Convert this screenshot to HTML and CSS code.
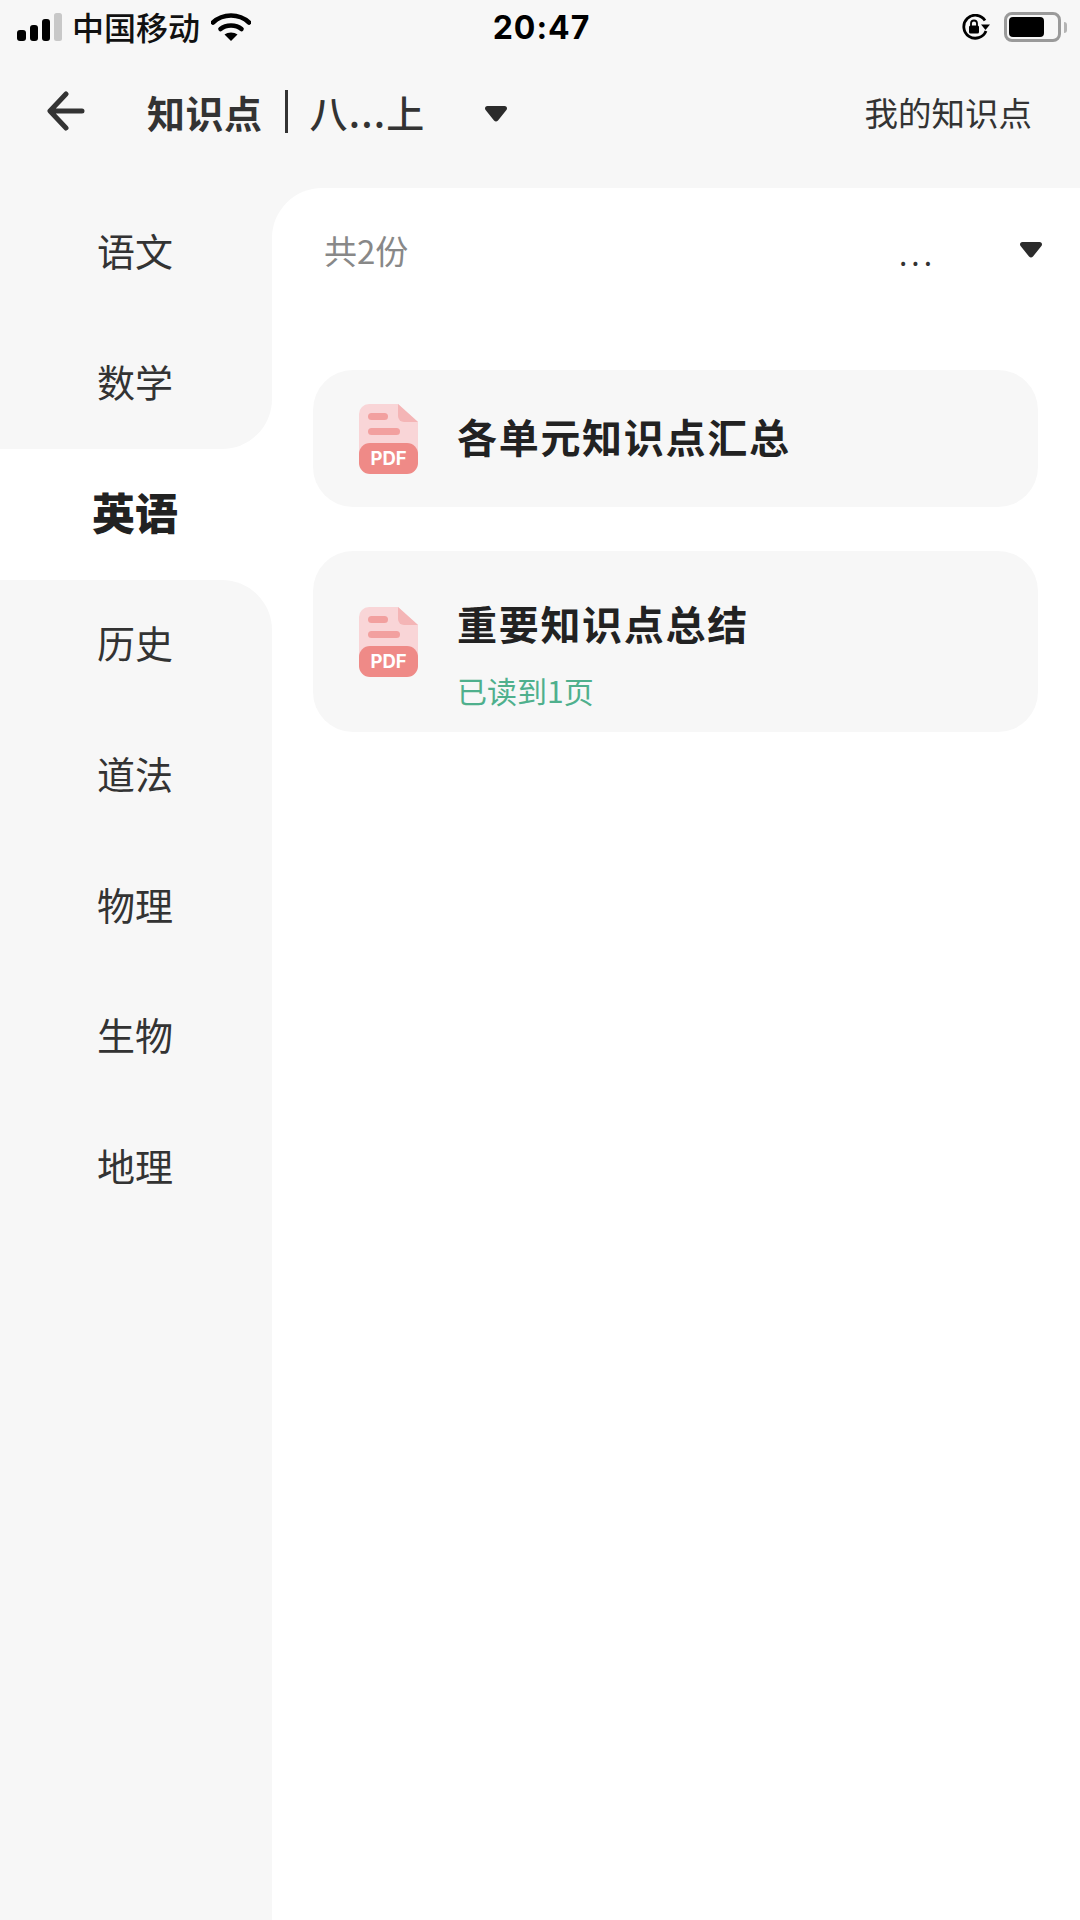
FILE: index.html
```html
<!DOCTYPE html>
<html lang="zh-CN">
<head>
<meta charset="utf-8">
<title>知识点</title>
<link rel="stylesheet" href="styles.css">
</head>
<body>
<div class="app">
  <header class="statusbar">
    <div class="status-left">
      <svg class="ic-signal" width="45" height="28" viewBox="0 0 45 28"><rect x="0" y="17" width="9" height="11" rx="3" fill="#000"/><rect x="13" y="12" width="8" height="16" rx="3" fill="#000"/><rect x="25" y="6" width="8" height="22" rx="3" fill="#000"/><rect x="37" y="0" width="8" height="28" rx="2.5" fill="#c8c8c8"/></svg>
      <span class="carrier">中国移动</span>
      <svg class="ic-wifi" width="40" height="29" viewBox="0 0 40 29"><path d="M2 10.5C12 1.2 28 1.2 38 10.5" fill="none" stroke="#000" stroke-width="4.6" stroke-linecap="round"/><path d="M9.5 17C15 12.3 25 12.3 30.5 17" fill="none" stroke="#000" stroke-width="4.6" stroke-linecap="round"/><path d="M13.5 22.6C17 19.9 23 19.9 26.5 22.6L20 29Z" fill="#000"/></svg>
    </div>
    <div class="time">20:47</div>
    <div class="status-right">
      <svg class="ic-rotate" width="29" height="27" viewBox="0 0 29 27"><path d="M24 6.5A11.5 11.5 0 1 0 25 17" fill="none" stroke="#000" stroke-width="2.8"/><path d="M20 10.5H29L24.5 16Z" fill="#000"/><rect x="8" y="11.5" width="10" height="8" rx="1.5" fill="#000"/><path d="M10 12V9.5a3 3 0 0 1 6 0V12" fill="none" stroke="#000" stroke-width="1.8"/></svg>
      <div class="battery"><div class="battery-fill"></div></div>
      <div class="battery-nub"></div>
    </div>
  </header>

  <nav class="navbar">
    <svg class="ic-back" width="38" height="40" viewBox="0 0 38 40"><path d="M35 20H4M19 3L3 20L19 37" fill="none" stroke="#333" stroke-width="5" stroke-linecap="round" stroke-linejoin="round"/></svg>
    <div class="nav-title">
      <span class="nav-name">知识点</span>
      <i class="nav-sep"></i>
      <span class="nav-grade">八...上</span>
    </div>
    <svg class="caret nav-caret" width="24" height="18" viewBox="0 0 24 18"><path d="M1 3.5Q1 1 3.5 1H20.5Q23 1 23 3.5Q23 4.5 22 5.5L14 15.5Q12 17.5 10 15.5L2 5.5Q1 4.5 1 3.5Z" fill="#2b2b2b"/></svg>
    <a class="nav-link">我的知识点</a>
  </nav>

  <main class="main">
    <aside class="sidebar">
      <div class="subject">语文</div>
      <div class="subject before-active">数学</div>
      <div class="subject active">英语</div>
      <div class="subject after-active">历史</div>
      <div class="subject">道法</div>
      <div class="subject">物理</div>
      <div class="subject">生物</div>
      <div class="subject">地理</div>
      <div class="sidebar-fill"></div>
    </aside>

    <section class="panel">
      <div class="panel-head">
        <span class="count">共2份</span>
        <span class="filter">...</span>
        <svg class="caret" width="24" height="18" viewBox="0 0 24 18"><path d="M1 3.5Q1 1 3.5 1H20.5Q23 1 23 3.5Q23 4.5 22 5.5L14 15.5Q12 17.5 10 15.5L2 5.5Q1 4.5 1 3.5Z" fill="#2b2b2b"/></svg>
      </div>

      <div class="card-list">
        <article class="card">
          <svg class="ic-pdf" width="59" height="70" viewBox="0 0 59 70"><path d="M10 0H39L59 18V60H0V10A10 10 0 0 1 10 0Z" fill="#f9d5d7"/><path d="M39 0L59 18H45A6 6 0 0 1 39 12Z" fill="#f4b5b6"/><rect x="9" y="9" width="20" height="7" rx="3.5" fill="#f2a09f"/><rect x="9" y="24" width="32" height="7" rx="3.5" fill="#f2a09f"/><rect x="0" y="39" width="59" height="31" rx="11" fill="#ef8a87"/><text class="pdf-label" x="29.5" y="61">PDF</text></svg>
          <div class="card-text">
            <h3 class="card-title">各单元知识点汇总</h3>
          </div>
        </article>
        <article class="card">
          <svg class="ic-pdf" width="59" height="70" viewBox="0 0 59 70"><path d="M10 0H39L59 18V60H0V10A10 10 0 0 1 10 0Z" fill="#f9d5d7"/><path d="M39 0L59 18H45A6 6 0 0 1 39 12Z" fill="#f4b5b6"/><rect x="9" y="9" width="20" height="7" rx="3.5" fill="#f2a09f"/><rect x="9" y="24" width="32" height="7" rx="3.5" fill="#f2a09f"/><rect x="0" y="39" width="59" height="31" rx="11" fill="#ef8a87"/><text class="pdf-label" x="29.5" y="61">PDF</text></svg>
          <div class="card-text with-sub">
            <h3 class="card-title">重要知识点总结</h3>
            <p class="card-sub">已读到1页</p>
          </div>
        </article>
      </div>
    </section>
  </main>
</div>
</body>
</html>
```

FILE: styles.css
```css
* { box-sizing: border-box; }

html, body {
  margin: 0;
  padding: 0;
  width: 1080px;
  height: 1920px;
  overflow: hidden;
  background: #f7f7f7;
  font-family: "Noto Sans CJK SC", "Noto Sans", sans-serif;
  color: #333;
}

.app {
  display: flex;
  flex-direction: column;
  height: 1920px;
}

/* status bar */
.statusbar {
  display: grid;
  grid-template-columns: 1fr auto 1fr;
  align-items: center;
  height: 54px;
  padding: 0 13px 0 17px;
  flex: none;
}

.status-left {
  display: flex;
  align-items: center;
}

.carrier {
  margin: -2px 0 0 10px;
  font-size: 32px;
  line-height: 40px;
  font-weight: 500;
  color: #111;
}

.ic-wifi { margin-left: 11px; margin-top: -1px; }

.time {
  margin-left: -1px;
  font-family: "Inter", "Liberation Sans", sans-serif;
  font-size: 32px;
  font-weight: 700;
  letter-spacing: 1px;
  color: #000;
}

.status-right {
  display: flex;
  align-items: center;
  justify-content: flex-end;
}

.battery {
  margin-left: 14px;
  width: 57px;
  height: 30px;
  padding: 2px;
  border: 3px solid #9a9a9a;
  border-radius: 8px;
}

.battery-fill {
  width: 35px;
  height: 20px;
  background: #000;
  border-radius: 4px;
}

.battery-nub {
  margin-left: 3px;
  width: 3px;
  height: 11px;
  background: #b4b4b4;
  border-radius: 0 3px 3px 0;
}

/* nav bar */
.navbar {
  display: flex;
  align-items: center;
  flex: none;
  height: 134px;
  padding: 0 48px 19px 47px;
}

.ic-back { margin-top: -2px; }

.nav-title {
  display: flex;
  align-items: center;
  margin-left: 62px;
  font-size: 38px;
  line-height: 50px;
  font-weight: 700;
  color: #333;
}

.nav-name { letter-spacing: 0.5px; }

.nav-sep {
  display: block;
  width: 3px;
  height: 43px;
  margin: 0 22px 0 22px;
  background: #333;
}

.nav-grade {
  font-weight: 500;
  letter-spacing: 1.2px;
}

.nav-caret { margin-left: 58px; margin-top: 4px; }

.nav-link {
  margin-left: auto;
  font-size: 33.5px;
  line-height: 44px;
  color: #333;
}

/* body */
.main {
  display: flex;
  flex: 1;
  min-height: 0;
}

.sidebar {
  display: flex;
  flex-direction: column;
  flex: none;
  width: 272px;
  background: #fff;
}

.subject {
  display: flex;
  align-items: center;
  justify-content: center;
  flex: none;
  height: 130.7px;
  padding: 0 2px 7px 0;
  background: #f7f7f7;
  font-size: 38px;
  color: #333;
}

.subject.before-active { border-bottom-right-radius: 50px; }
.subject.after-active { border-top-right-radius: 50px; }

.subject.active {
  background: #fff;
  font-size: 43px;
  font-weight: 900;
  color: #222;
}

.sidebar-fill {
  flex: 1;
  background: #f7f7f7;
}

.panel {
  flex: 1;
  background: #fff;
  border-top-left-radius: 50px;
}

.panel-head {
  display: flex;
  align-items: center;
  height: 128px;
  padding: 0 37px 0 52px;
}

.count {
  margin-top: -5px;
  font-size: 33px;
  line-height: 42px;
  color: #888;
}

.filter {
  margin-left: auto;
  font-size: 30px;
  line-height: 42px;
  letter-spacing: 4px;
  color: #333;
  position: relative;
  top: 1px;
}

.panel-head .caret { margin-left: 83px; margin-top: -4px; }

.card-list {
  display: flex;
  flex-direction: column;
  gap: 44px;
  margin: 54px 42px 0 41px;
}

.card {
  display: flex;
  align-items: center;
  gap: 39px;
  min-height: 137px;
  padding-left: 46px;
  background: #f7f7f7;
  border-radius: 40px;
}

.ic-pdf { flex: none; }

.pdf-label {
  font-family: "Inter", "Liberation Sans", sans-serif;
  font-size: 18.5px;
  font-weight: 700;
  fill: #fff;
  text-anchor: middle;
}

.card-text { padding-bottom: 5px; }

.card-text.with-sub {
  display: flex;
  flex-direction: column;
  gap: 17px;
  padding: 44px 0 20px;
}

.card-title {
  margin: 0;
  font-size: 40px;
  line-height: 56px;
  font-weight: 700;
  letter-spacing: 1.7px;
  color: #222;
}

.card-sub {
  margin: 0;
  font-size: 30px;
  line-height: 44px;
  color: #4fb08d;
}
```
